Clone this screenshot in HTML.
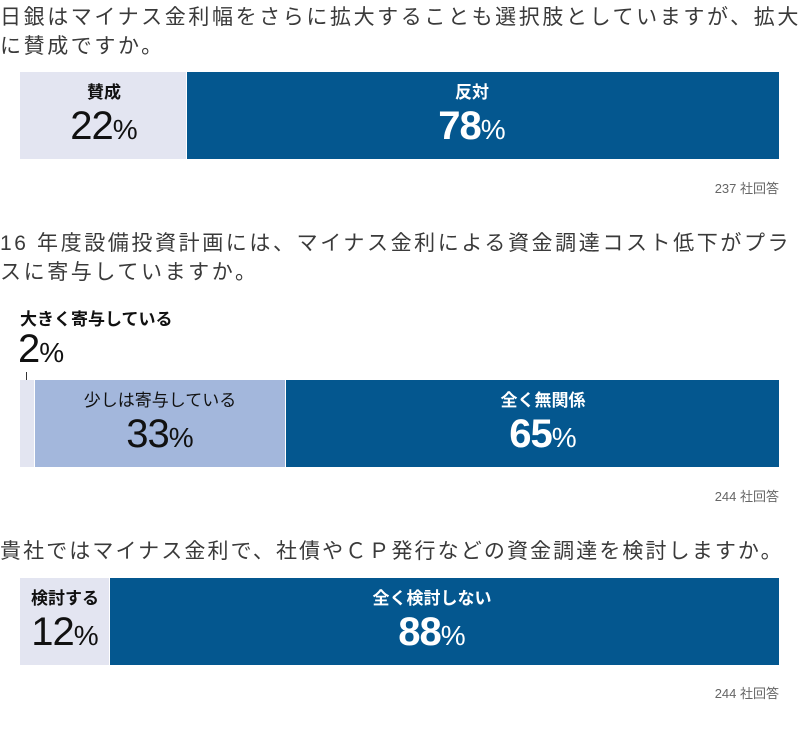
<!DOCTYPE html>
<html><head><meta charset="utf-8"><style>
body{margin:0;width:800px;height:737px;background:#fff;position:relative;overflow:hidden;font-family:"Liberation Sans","Noto Sans CJK JP",sans-serif;}
.q{position:absolute;left:0;font-size:21px;line-height:29px;color:#3a3a3a;white-space:nowrap;letter-spacing:2.6px}
.bar{position:absolute;left:20px;width:759px;height:87px;}
.seg{position:absolute;top:0;height:100%;}
.lab{position:absolute;text-align:center;white-space:nowrap;transform:translateX(-50%)}
.lab .t{font-size:17px;font-weight:bold;line-height:20px}
.lab .n{font-size:40px;line-height:46px;letter-spacing:-1px}
.lab .n small{font-size:28px;letter-spacing:0;font-weight:normal}
.dark{background:#04578f;color:#fff}
.light{background:#e3e5f1;color:#111}
.mid{background:#a3b7dc;color:#111}
.note{position:absolute;right:21px;font-size:13px;color:#666}
</style></head><body>
<div class="q" style="top:3px">日銀はマイナス金利幅をさらに拡大することも選択肢としていますが、拡大<br>に賛成ですか。</div>
<div class="bar" style="top:72px">
 <div class="seg light" style="left:0;width:166px"></div>
 <div class="seg dark" style="left:167px;width:592px"></div>
 <div class="lab" style="left:84px;top:11px;color:#111"><div class="t">賛成</div><div class="n">22<small>%</small></div></div>
 <div class="lab" style="left:452px;top:11px;color:#fff"><div class="t">反対</div><div class="n" style="font-weight:bold">78<small>%</small></div></div>
</div>
<div class="note" style="top:178px">237 社回答</div>

<div class="q" style="top:229px">16 年度設備投資計画には、マイナス金利による資金調達コスト低下がプラ<br>スに寄与していますか。</div>
<div style="position:absolute;left:20px;top:305px;font-size:17px;font-weight:bold;color:#111">大きく寄与している</div>
<div style="position:absolute;left:18px;top:326px;font-size:40px;line-height:46px;color:#111;letter-spacing:-1px">2<span style="font-size:28px">%</span></div>
<div style="position:absolute;left:26px;top:372px;width:1px;height:12px;background:#333"></div>
<div style="position:absolute;left:24px;top:382px;width:5px;height:5px;border-radius:50%;background:#333"></div>
<div class="bar" style="top:380px">
 <div class="seg light" style="left:0;width:14px"></div>
 <div class="seg mid" style="left:15px;width:250px"></div>
 <div class="seg dark" style="left:266px;width:493px"></div>
 <div class="lab" style="left:140px;top:11px;color:#111"><div class="t" style="font-weight:normal">少しは寄与している</div><div class="n">33<small>%</small></div></div>
 <div class="lab" style="left:523px;top:11px;color:#fff"><div class="t">全く無関係</div><div class="n" style="font-weight:bold">65<small>%</small></div></div>
</div>
<div class="note" style="top:486px">244 社回答</div>

<div class="q" style="top:537px;letter-spacing:2.1px">貴社ではマイナス金利で、社債やＣＰ発行などの資金調達を検討しますか。</div>
<div class="bar" style="top:578px">
 <div class="seg light" style="left:0;width:89px"></div>
 <div class="seg dark" style="left:90px;width:669px"></div>
 <div class="lab" style="left:45px;top:11px;color:#111"><div class="t">検討する</div><div class="n">12<small>%</small></div></div>
 <div class="lab" style="left:412px;top:11px;color:#fff"><div class="t">全く検討しない</div><div class="n" style="font-weight:bold">88<small>%</small></div></div>
</div>
<div class="note" style="top:683px">244 社回答</div>
</body></html>
